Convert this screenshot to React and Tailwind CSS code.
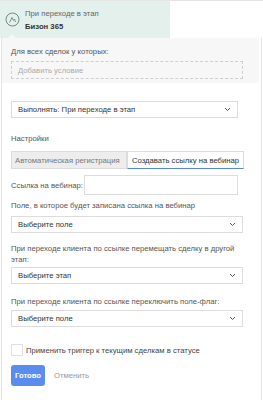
import React from 'react';

const Chevron = () => (
  <svg width="7" height="5" viewBox="0 0 7 5" className="shrink-0">
    <path d="M1 1l2.5 2.5L6 1" fill="none" stroke="#555" strokeWidth="1" />
  </svg>
);

const Select = ({ label, w = 'w-[232px]' }) => (
  <div className={`${w} h-[17px] border border-[#dcdcdc] bg-white flex items-center justify-between pl-[6px] pr-[6px] text-[#333]`}>
    <span>{label}</span>
    <Chevron />
  </div>
);

const App = () => {
  return (
    <div className="w-[263px] h-[400px] bg-white overflow-hidden text-[7.7px] leading-[11px] text-[#444]" style={{ fontFamily: '"Liberation Sans", Arial, sans-serif' }}>
      {/* header */}
      <div className="flex border-t border-[#e6e6e6]">
        <div className="w-[170px] h-[37px] bg-[#e3f0eb] flex items-center pl-[5px] gap-[5px]">
          <svg width="15" height="15" viewBox="0 0 15 15">
            <circle cx="7.5" cy="7.5" r="6.5" fill="none" stroke="#6f8c80" strokeWidth="1" />
            <path d="M4.5 10.5L7 5.5l1.5 3 1-1.5 1 3" fill="none" stroke="#6f8c80" strokeWidth="0.9" />
          </svg>
          <div className="flex flex-col gap-[2px]">
            <span className="text-[#666]">При переходе в этап</span>
            <span className="font-bold text-[#333]">Бизон 365</span>
          </div>
        </div>
      </div>

      {/* panel */}
      <div className="relative w-[261px] ml-[1px] border-l border-r border-[#e3e3e3] h-[363px]">
        <div className="absolute -top-[4px] left-[6px] w-0 h-0 border-l-[4px] border-r-[4px] border-b-[4px] border-l-transparent border-r-transparent border-b-[#f7f7f7]" />
        <div className="bg-[#f7f7f7] w-[257px] pl-[9px] pt-[8px] pb-[4px]">
          <div className="text-[#555]">Для всех сделок у которых:</div>
          <div className="mt-[4px] w-[232px] h-[18px] border border-dashed border-[#cfcfcf] flex items-center pl-[6px] text-[#aaa]">
            Добавить условие
          </div>
        </div>

        <div className="pl-[9px] pt-[18px]">
          <Select label="Выполнять: При переходе в этап" w="w-[227px]" />

          <div className="mt-[15px] text-[#555]">Настройки</div>
          <div className="mt-[7px] flex h-[18px] whitespace-nowrap">
            <div className="w-[116px] bg-[#ededed] border border-[#dcdcdc] flex items-center pl-[3px] text-[#777]">
              Автоматическая регистрация
            </div>
            <div className="w-[117px] bg-white border border-[#dcdcdc] border-b-[#5b87d6] flex items-center pl-[4px] text-[#333]">
              Создавать ссылку на вебинар
            </div>
          </div>

          <div className="mt-[6px] flex items-center gap-[2px]">
            <span className="text-[#555] w-[71px] whitespace-nowrap">Ссылка на вебинар:</span>
            <div className="w-[154px] h-[20px] border border-[#dcdcdc] bg-white" />
          </div>

          <div className="mt-[5px] text-[#555]">Поле, в которое будет записана ссылка на вебинар</div>
          <div className="mt-[5px]"><Select label="Выберите поле" /></div>

          <div className="mt-[10px] text-[#555] w-[236px]">При переходе клиента по ссылке перемещать сделку в другой этап:</div>
          <div className="mt-[2px]"><Select label="Выберите этап" /></div>

          <div className="mt-[12px] text-[#555]">При переходе клиента по ссылке переключить поле-флаг:</div>
          <div className="mt-[3px]"><Select label="Выберите поле" /></div>

          <div className="mt-[17px] flex items-center gap-[3px]">
            <div className="w-[12px] h-[12px] border border-[#e0e0e0] bg-white" />
            <span className="text-[#444]">Применить триггер к текущим сделкам в статусе</span>
          </div>

          <div className="mt-[9px] flex items-center gap-[9px]">
            <div className="w-[34px] h-[21px] bg-[#5b8def] rounded-[3px] text-white font-bold flex items-center justify-center">
              Готово
            </div>
            <span className="text-[#999]">Отменить</span>
          </div>
        </div>
      </div>
    </div>
  );
};

export default App;
